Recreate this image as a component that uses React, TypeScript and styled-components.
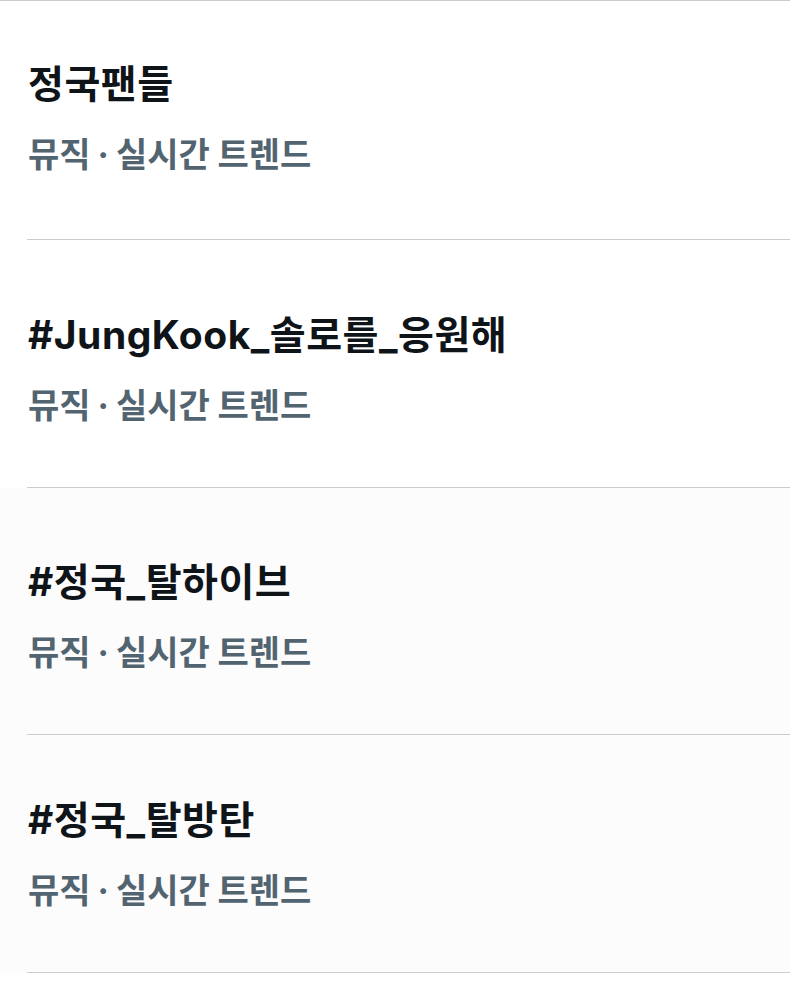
import React from "react";
import styled, { createGlobalStyle } from "styled-components";

const GlobalStyle = createGlobalStyle`
  html, body {
    margin: 0;
    padding: 0;
    background: #ffffff;
  }
  body {
    font-family: "Inter", "Noto Sans CJK KR", "Noto Sans", sans-serif;
    -webkit-font-smoothing: antialiased;
  }
`;

const List = styled.div`
  width: 790px;
  border-top: 1px solid #cccccc;
  display: flex;
  flex-direction: column;
`;

const Row = styled.div<{ $tint: boolean }>`
  background: ${(p) => (p.$tint ? "#fcfcfc" : "#ffffff")};
  padding-left: 27px;
`;

const Content = styled.div<{ $top: number; $bottom: number }>`
  padding: ${(p) => p.$top}px 0 ${(p) => p.$bottom}px 1px;
  border-bottom: 1px solid #cccccc;
  display: flex;
  flex-direction: column;
`;

const Title = styled.div`
  height: 48px;
  font-family: "Inter", "Noto Sans CJK KR", sans-serif;
  font-size: 39px;
  line-height: 48px;
  font-weight: 700;
  letter-spacing: 0.5px;
  color: #0f1419;
  white-space: nowrap;
`;

const Meta = styled.div`
  height: 40px;
  margin-top: 25px;
  font-family: "Noto Sans CJK KR", sans-serif;
  font-size: 34px;
  line-height: 40px;
  font-weight: 700;
  color: #536471;
  white-space: nowrap;
`;

const Dot = styled.span`
  font-family: "Inter", sans-serif;
  margin: 0 7px;
`;

const trends = [
  { title: "정국팬들", top: 59, bottom: 66, tint: false },
  { title: "#JungKook_솔로를_응원해", top: 71, bottom: 63, tint: false },
  { title: "#정국_탈하이브", top: 70, bottom: 63, tint: true },
  { title: "#정국_탈방탄", top: 61, bottom: 63, tint: true },
];

export default function App() {
  return (
    <>
      <GlobalStyle />
      <List>
        {trends.map((t) => (
          <Row key={t.title} $tint={t.tint}>
            <Content $top={t.top} $bottom={t.bottom}>
              <Title>{t.title}</Title>
              <Meta>
                뮤직<Dot>·</Dot>실시간 트렌드
              </Meta>
            </Content>
          </Row>
        ))}
      </List>
    </>
  );
}
